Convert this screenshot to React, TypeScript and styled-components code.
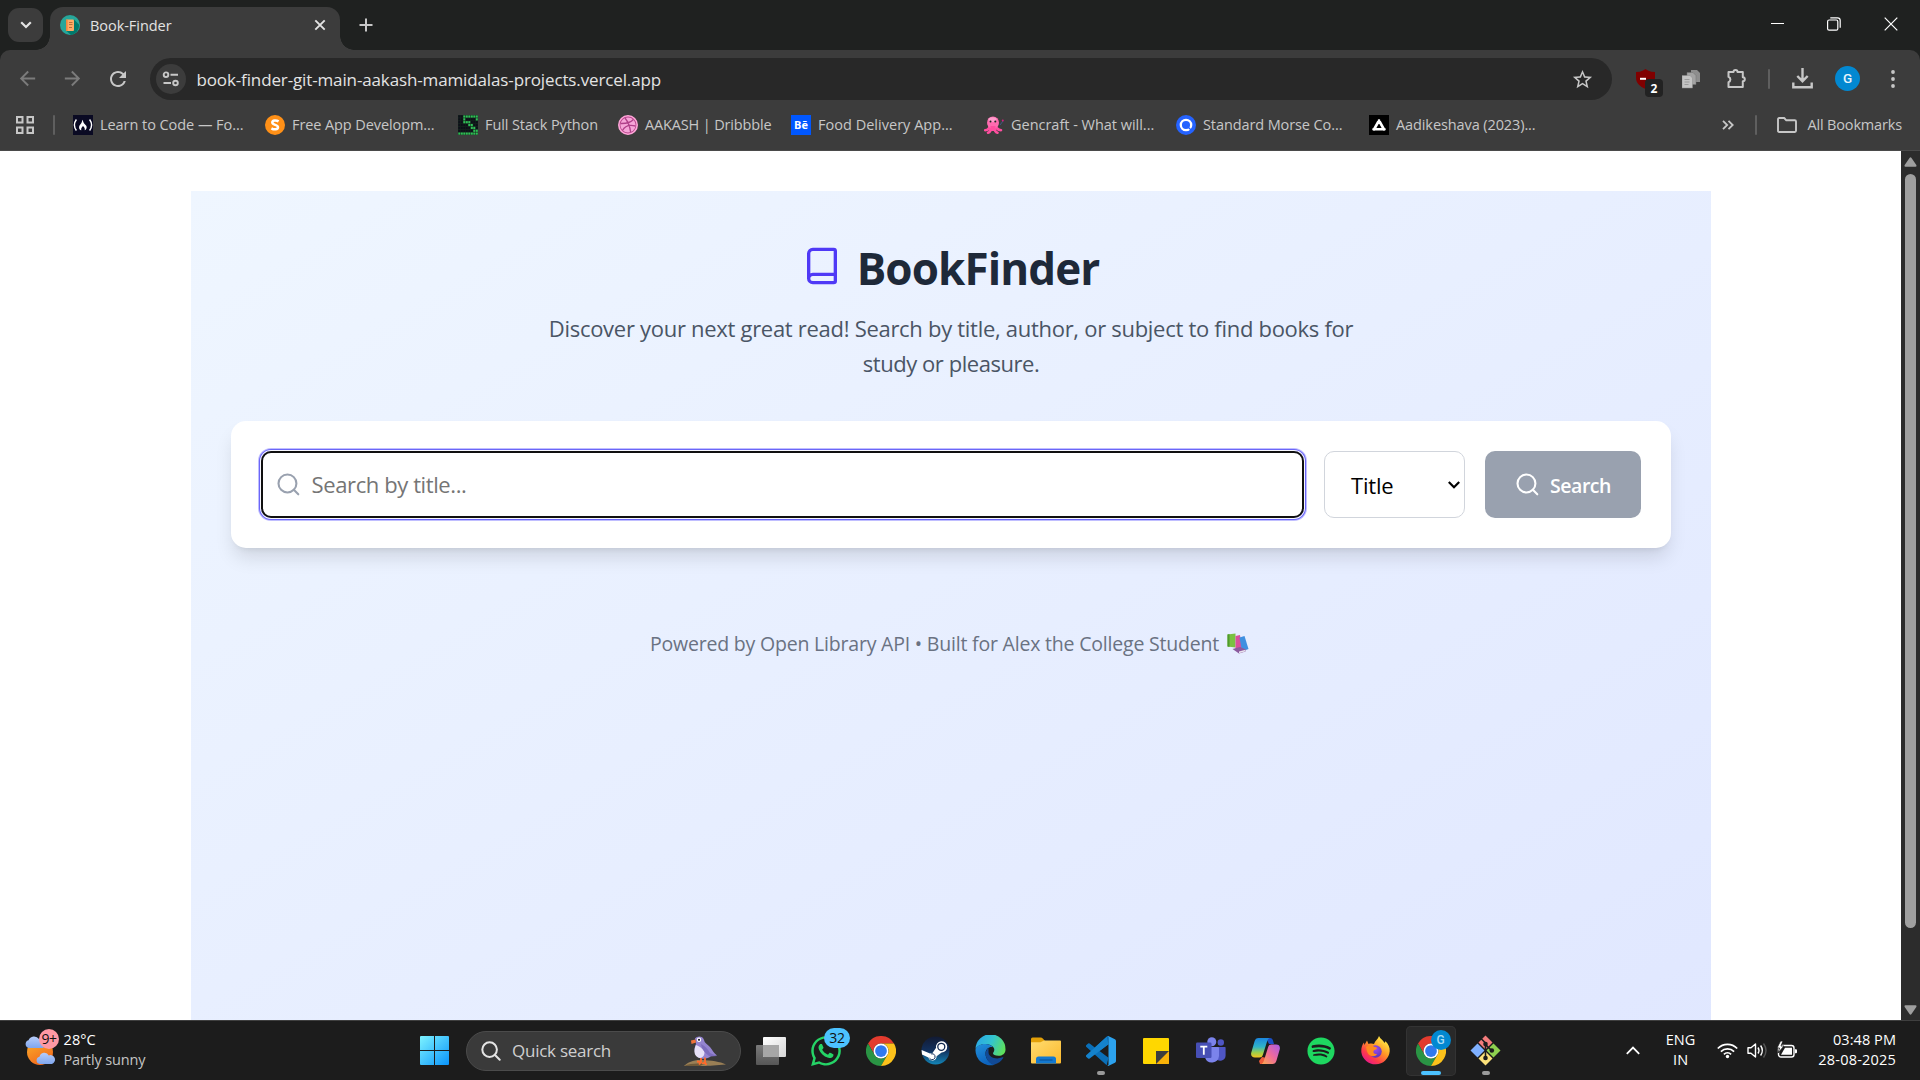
import React from "react";
import styled, { createGlobalStyle, css } from "styled-components";
import { Book } from "lucide-react";
import { FaWhatsapp, FaSpotify } from "react-icons/fa";
import { MdArrowBack, MdArrowForward, MdRefresh, MdStarBorder } from "react-icons/md";

const Global = createGlobalStyle`
  * { box-sizing: border-box; }
  body { margin: 0; overflow: hidden; font-family: "Open Sans", "Noto Sans", sans-serif; }
  svg { display: block; flex: none; }
`;

const Screen = styled.div`
  display: grid;
  grid-template-rows: 50px 101px 869px 60px;
  width: 1920px;
  height: 1080px;
  overflow: hidden;
`;

const Label = styled.span<{ $size?: number; $track?: number; $color?: string; $weight?: number }>`
  font-size: ${(p) => p.$size ?? 14.5}px;
  font-weight: ${(p) => p.$weight ?? 400};
  letter-spacing: ${(p) => p.$track ?? 0}px;
  color: ${(p) => p.$color ?? "#c7c7c7"};
  white-space: nowrap;
`;

/* ---------- tab strip ---------- */

const TabStrip = styled.header`
  display: flex;
  background: #1f2120;
`;

const TabSearch = styled.button`
  display: grid;
  place-items: center;
  width: 35px;
  height: 34px;
  margin: 8px 7px 0 8px;
  padding: 0;
  border: 0;
  border-radius: 11px;
  background: #3c3c3c;
`;

const Tab = styled.div`
  position: relative;
  display: flex;
  align-items: center;
  width: 290px;
  height: 43px;
  margin-top: 7px;
  padding: 0 12px 7px 10px;
  border-radius: 13px 13px 0 0;
  background: #3c3c3c;

  &::before,
  &::after {
    content: "";
    position: absolute;
    bottom: 0;
    width: 14px;
    height: 14px;
  }
  &::before {
    left: -14px;
    background: radial-gradient(circle at 0 0, transparent 13.5px, #3c3c3c 14px);
  }
  &::after {
    right: -14px;
    background: radial-gradient(circle at 100% 0, transparent 13.5px, #3c3c3c 14px);
  }
`;

const TabTitle = styled(Label)`
  flex: 1;
  margin-left: 10px;
  padding-top: 1px;
`;

const NewTab = styled.div`
  display: grid;
  place-items: center;
  width: 51px;
  height: 50px;
`;

const WindowButtons = styled.div`
  display: flex;
  align-items: center;
  gap: 43px;
  height: 48px;
  margin-left: auto;
  padding-right: 22px;
`;

/* ---------- toolbar ---------- */

const Chrome = styled.div`
  background: #1f2120;
`;

const ChromeBody = styled.div`
  display: grid;
  grid-template-rows: 57px 43px;
  height: 101px;
  border-radius: 10px 10px 0 0;
  border-bottom: 1px solid #4a4a4a;
  background: #3c3c3c;
`;

const Toolbar = styled.div`
  display: flex;
  align-items: center;
  padding-left: 5px;
`;

const Tool = styled.div<{ $w?: number; $dim?: boolean }>`
  display: grid;
  place-items: center;
  width: ${(p) => p.$w ?? 45}px;
  height: 42px;
  color: ${(p) => (p.$dim ? "#7b7b7b" : "#c7c7c7")};
`;

const AddressBar = styled.div`
  display: flex;
  align-items: center;
  width: 1462px;
  height: 42px;
  margin: 1px 11px 0 10px;
  padding: 0 18px 0 6px;
  border-radius: 21px;
  background: #282828;
  color: #c7c7c7;
`;

const SiteInfo = styled.div`
  display: grid;
  place-items: center;
  width: 30px;
  height: 30px;
  margin-right: 10.5px;
  border-radius: 50%;
  background: #3c3c3c;
`;

const Url = styled(Label)`
  flex: 1;
`;

const Divider = styled.div<{ $ml?: number; $mr?: number }>`
  width: 2px;
  height: 20px;
  margin-left: ${(p) => p.$ml ?? 0}px;
  margin-right: ${(p) => p.$mr ?? 0}px;
  border-radius: 1px;
  background: #5f5f5f;
`;

const ShieldTool = styled(Tool)`
  position: relative;
`;

const ShieldCount = styled.span`
  position: absolute;
  left: 22px;
  top: 21px;
  width: 18px;
  height: 18px;
  border-radius: 4px;
  background: #222;
  color: #fff;
  font-size: 12px;
  font-weight: 700;
  line-height: 19px;
  text-align: center;
`;

const Avatar = styled.div`
  width: 25px;
  height: 25px;
  border-radius: 50%;
  background: #0288d1;
  color: #e8f4fb;
  font: 500 13.5px/25px Roboto, sans-serif;
  text-align: center;
`;

/* ---------- bookmarks ---------- */

const Bookmarks = styled.nav`
  display: flex;
  align-items: center;
  padding: 0 18px 7px 15.5px;
`;

const BookmarkText = styled(Label)`
  padding-bottom: 2px;
`;

const Bookmark = styled.div<{ $w: number }>`
  display: flex;
  align-items: center;
  gap: 7px;
  width: ${(p) => p.$w}px;
`;

const AllBookmarks = styled.div`
  display: flex;
  align-items: center;
  gap: 10px;
`;

const Overflow = styled.div`
  margin-left: auto;
`;

/* ---------- page ---------- */

const Viewport = styled.main`
  display: flex;
  overflow: hidden;
  background: #fff;
`;

const Page = styled.div`
  flex: 1;
  padding: 40px 190px 0 191px;
`;

const Finder = styled.div`
  height: 875px;
  padding: 50px 40px 0;
  background: linear-gradient(to bottom right in oklab, #eff6ff, #e0e7ff);
`;

const Brand = styled.h1`
  display: flex;
  align-items: center;
  justify-content: center;
  gap: 15px;
  height: 54px;
  margin: 0;
  padding-right: 1px;

  svg {
    margin-bottom: 5px;
  }
`;

const Tagline = styled.p`
  display: grid;
  justify-items: center;
  margin: 16px 0 40px;
  line-height: 35px;
`;

const SearchCard = styled.form`
  display: flex;
  gap: 20px;
  height: 127px;
  padding: 30px;
  border-radius: 15px;
  background: #fff;
  box-shadow: 0 12.5px 18.75px -3.75px rgba(0, 0, 0, 0.12), 0 5px 7.5px -5px rgba(0, 0, 0, 0.1);
`;

const Field = styled.label`
  display: flex;
  align-items: center;
  gap: 11px;
  flex: 1;
  padding-left: 12.6px;
  border: 2px solid #101010;
  border-radius: 10px;
  box-shadow: 0 0 0 1px #f8f8ff, 0 0 0 2px #6b66f8, 0 0 0 3px #c0beff;
`;

const Query = styled.input`
  flex: 1;
  padding: 0 0 1px;
  border: 0;
  outline: 0;
  background: transparent;
  font: 400 22px "Open Sans", "Noto Sans", sans-serif;
  letter-spacing: -0.4px;

  &::placeholder {
    color: #757575;
    opacity: 1;
  }
`;

const Kind = styled.div`
  display: flex;
  align-items: center;
  justify-content: space-between;
  width: 141px;
  padding: 0 4px 0 26px;
  border: 1px solid #d1d5dc;
  border-radius: 10px;
`;

const Submit = styled.button`
  display: flex;
  align-items: center;
  gap: 10px;
  width: 156px;
  padding: 0 0 0 30px;
  border: 0;
  border-radius: 10px;
  background: #99a1af;
  font-family: inherit;
`;

const SubmitText = styled(Label)`
  padding-top: 2px;
`;

const Credits = styled.footer`
  display: flex;
  align-items: center;
  justify-content: center;
  gap: 8px;
  height: 30px;
  margin-top: 80px;
  padding-right: 3px;
`;

const Scrollbar = styled.div`
  display: flex;
  flex-direction: column;
  align-items: center;
  width: 19px;
  padding: 6px 0 5px;
  background: #2c2c2c;
`;

const Thumb = styled.div`
  width: 11px;
  height: 754px;
  margin: 7px 0 auto;
  border-radius: 6px;
  background: #9f9f9f;
`;

/* ---------- taskbar ---------- */

const Taskbar = styled.footer`
  display: flex;
  align-items: center;
  border-top: 1px solid #3f3f3f;
  background: #1c1c1c;
`;

const Weather = styled.div`
  display: flex;
  align-items: center;
  width: 407px;
  padding-left: 24px;
`;

const WeatherIcon = styled.div`
  position: relative;
  width: 39.5px;
`;

const badge = css`
  position: absolute;
  color: #111;
  text-align: center;
`;

const AlertBadge = styled.span`
  ${badge}
  left: 15px;
  top: -6px;
  width: 20px;
  height: 20px;
  border-radius: 50%;
  background: #ff99a4;
  font-size: 14px;
  letter-spacing: -0.4px;
  line-height: 20px;
`;

const CountBadge = styled.span`
  ${badge}
  left: 26px;
  top: 5px;
  width: 26px;
  height: 20px;
  border-radius: 10px;
  background: #4cc2ff;
  font-size: 14px;
  letter-spacing: -0.3px;
  line-height: 20px;
`;

const ProfileBadge = styled.span`
  ${badge}
  left: 25px;
  top: 4px;
  width: 20px;
  height: 20px;
  border-radius: 50%;
  background: #0288d1;
  color: #a9dcf5;
  font: 500 12px/20px Roboto, sans-serif;
`;

const Stack = styled.div<{ $align?: string }>`
  display: grid;
  justify-items: ${(p) => p.$align ?? "start"};
  padding-bottom: 2px;
  line-height: 20px;
`;

const TaskCell = styled.div<{ $active?: boolean }>`
  position: relative;
  display: grid;
  place-items: center;
  width: ${(p) => (p.$active ? 50 : 55)}px;
  height: ${(p) => (p.$active ? 50 : 55)}px;
  margin: 0 ${(p) => (p.$active ? 2.5 : 0)}px;
  border-radius: 5px;
  ${(p) => p.$active && "background: #292929; box-shadow: inset 0 0 0 1px #333;"}
`;

const Running = styled.i<{ $wide?: boolean }>`
  position: absolute;
  bottom: ${(p) => (p.$wide ? 1 : 3)}px;
  left: 50%;
  width: ${(p) => (p.$wide ? 20 : 8)}px;
  height: 4px;
  border-radius: 2px;
  background: ${(p) => (p.$wide ? "#4cc2ff" : "#9a9a9a")};
  transform: translateX(-50%);
`;

const QuickSearch = styled.div`
  display: flex;
  align-items: center;
  width: 275px;
  height: 40px;
  margin: 0 2px 0 4px;
  padding: 0 14px 0 13.5px;
  border: 1px solid #4b4b4b;
  border-radius: 20px;
  background: #3a3a3a;
`;

const QuickLabel = styled(Label)`
  flex: 1;
  margin-left: 11.5px;
`;

const Tray = styled.div`
  display: flex;
  align-items: center;
  margin-left: auto;
  padding-right: 24px;
`;

const TrayIcons = styled.div`
  display: flex;
  align-items: center;
  gap: 9px;
  margin: 0 20px 0 22px;
  padding-bottom: 1px;
`;

const LangStack = styled(Stack)`
  margin-left: 26px;
  padding: 0 0 1px;
`;

/* ---------- drawings ---------- */

const stroke = (w: number, c = "currentColor") => ({ fill: "none", stroke: c, strokeWidth: w });

const Magnifier = ({ color }: { color: string }) => (
  <svg width="25" height="25" viewBox="0 0 24 24" {...stroke(2, color)} strokeLinecap="round">
    <circle cx="11" cy="11" r="8.6" />
    <path d="m21.4 21.4-4.3-4.3" />
  </svg>
);

const BookFavicon = () => (
  <svg width="20" height="20" viewBox="0 0 20 20">
    <circle cx="10" cy="10" r="10" fill="#26a69a" />
    <path d="M14 4.5 19.2 9.7A10 10 0 0 1 11 20l-5-4.5z" fill="#00796b" />
    <rect x="6" y="4.5" width="8" height="11.5" rx="1" fill="#ffab66" />
    <path d="M6 4.5h1.6v11.5H6z" fill="#f0863c" />
    <path d="M9 7.5h3.5M9 9.5h3.5M9 12.5h3" stroke="#b8713a" strokeWidth="1" />
  </svg>
);

const FccIcon = () => (
  <svg width="20" height="20" viewBox="0 0 20 20">
    <path d="M0 0h20v20H0z" fill="#0a0a23" />
    <path d="M3.4 4.500Q-.6 10 3.4 15.500M16.600 4.500Q20.600 10 16.600 15.500" {...stroke(1.4, "#fff")} />
    <path d="M9 4.700c1.600 1.500 1.200 3 2.600 4.400 1.400 1.400 2.400 2.200 2 3.900-.3 1.200-1 1.900-1.900 2.300.4-1.700-.2-3-1.700-4.300-1.300 1.300-2.200 2.600-1.700 4.300-1.400-.4-2.500-1.600-2.200-3.400.4-2.300 3.400-3.700 2.900-7.200z" fill="#fff" />
  </svg>
);

const SIcon = () => (
  <svg width="20" height="20" viewBox="0 0 20 20">
    <circle cx="10" cy="10" r="10" fill="#ff9017" />
    <path d="M13.6 6.400C11.400 5 7.300 4.900 7.300 7.500c0 2.800 5.700 1.900 5.700 4.700 0 2.700-4.200 2.500-6.600 1.100" {...stroke(2.5, "#fff")} />
  </svg>
);

const PixelIcon = () => {
  const art = ["00111111", "00100001", "00111000", "00001100", "00000110", "00000011", "11111111"];
  return (
    <svg width="20" height="20" viewBox="0 0 20 20">
      <path d="M0 0h20v20H0z" fill="#16271f" />
      {art.map((row, y) =>
        row.split("").map((v, x) => (
          <rect key={`${x}-${y}`} x={x * 2.5 + 0.3} y={y * 2.85 + 0.4} width="2" height="2.2" fill={v === "1" ? "#2fbf55" : "#0d0f18"} />
        ))
      )}
    </svg>
  );
};

const Dribbble = () => (
  <svg width="20" height="20" viewBox="0 0 20 20">
    <circle cx="10" cy="10" r="9.2" fill="#b8468c" stroke="#ffa6d9" strokeWidth="1.6" />
    <circle cx="10" cy="10" r="7.6" fill="#f6a5d8" />
    <path d="M7 3c4 5 5 9 5.600 14M2.600 8.500c6 .2 10-.8 12.800-4M4.500 15.500c2.500-5 7.500-6 13-4.500" {...stroke(1.3, "#b0408a")} />
  </svg>
);

const BehanceTile = styled.div`
  width: 20px;
  height: 20px;
  background: #0057ff;
  color: #fff;
  font: 700 11px/20px "Open Sans", sans-serif;
  text-align: center;
`;

const Octopus = () => (
  <svg width="20" height="20" viewBox="0 0 20 20">
    <path d="M5.500 11q0 4-4.300 4.200M7 12q.2 5-3 5.800M10.500 12q-.2 5 3 5.800M12 11q.5 3.700 5 4.200" {...stroke(2.600, "#ff4fa0")} strokeLinecap="round" />
    <ellipse cx="9" cy="7.700" rx="6" ry="6.200" fill="#ff6bb0" />
    <path d="M6.500 11h5v5h-5z" fill="#ff4fa0" />
    <ellipse cx="8.500" cy="4.600" rx="4" ry="2.400" fill="#ff9ccc" />
    <circle cx="6.500" cy="6.500" r="1" fill="#222" />
    <circle cx="11.300" cy="6.500" r="1" fill="#222" />
    <path d="m16 10 3-4" stroke="#3c5a8a" />
    <circle cx="18.800" cy="5.500" r="1" fill="#d81b7a" />
  </svg>
);

const MorseIcon = () => (
  <svg width="20" height="20" viewBox="0 0 20 20">
    <circle cx="10" cy="10" r="10" fill="#2563ff" />
    <circle cx="10" cy="10" r="5.2" {...stroke(2.3, "#fff")} />
    <path d="m11.800 11.800 3.500 3.500" stroke="#2563ff" strokeWidth="1.3" />
  </svg>
);

const TriangleIcon = () => (
  <svg width="20" height="20" viewBox="0 0 20 20">
    <path d="M0 0h20v20H0z" fill="#000" />
    <path d="M10 5.500 5 14.500M10 5.500l5 9M4.500 14.300h11" {...stroke(2.6, "#fff")} strokeLinecap="round" />
  </svg>
);

const ChromeLogo = () => (
  <svg width="30" height="30" viewBox="0 0 48 48">
    <path d="M44.800 12A24 24 0 0 0 3.200 12L13.600 30A12 12 0 0 1 24 12z" fill="#e33b2e" />
    <path d="M3.200 12A24 24 0 0 0 24 48L34.400 30A12 12 0 0 1 13.600 30z" fill="#2a9444" />
    <path d="M24 48A24 24 0 0 0 44.800 12H24A12 12 0 0 1 34.400 30z" fill="#fcc21b" />
    <circle cx="24" cy="24" r="12" fill="#fff" />
    <circle cx="24" cy="24" r="9.4" fill="#3079ee" />
  </svg>
);

const SteamLogo = () => (
  <svg width="29" height="29" viewBox="0 0 29 29">
    <defs>
      <linearGradient id="steam" x1="0" y1="0" x2="0" y2="1">
        <stop offset="0" stopColor="#121a33" />
        <stop offset=".5" stopColor="#12305c" />
        <stop offset="1" stopColor="#1386b8" />
      </linearGradient>
    </defs>
    <circle cx="14.5" cy="14.5" r="14" fill="url(#steam)" />
    <path d="M.6 14 9 17.500l2.500-.4 3.600-5.300a5.600 5.600 0 1 1 5.500 4.600l-5 3.900a4.200 4.200 0 0 1-8.200 1.300L1 18.600z" fill="#fff" />
    <circle cx="20.3" cy="10.8" r="3.5" fill="#fff" stroke="#12284f" strokeWidth="1.3" />
    <path d="M8.500 22.200a3 3 0 1 0 1.600-4.300" {...stroke(1, "#12305c")} />
  </svg>
);

const EdgeLogo = () => (
  <svg width="31" height="31" viewBox="0 0 31 31">
    <defs>
      <linearGradient id="edgeTop" x1="0" y1=".3" x2="1" y2=".6">
        <stop offset="0" stopColor="#2aa7e6" />
        <stop offset=".5" stopColor="#33c4cf" />
        <stop offset="1" stopColor="#5fe05a" />
      </linearGradient>
      <linearGradient id="edgeLeft" x1="0" y1="0" x2=".4" y2="1">
        <stop offset="0" stopColor="#2291dc" />
        <stop offset="1" stopColor="#0d63bd" />
      </linearGradient>
    </defs>
    <path d="M.5 14A15 15 0 0 1 30.500 14.500c0 4-3 6.300-7 6.300-3.500 0-5.500-1.300-5.500-2.500 0-1 1.300-1.500 1.300-3.600C19.300 11.500 15 9 10.500 9 5 9 1.500 12 .5 14z" fill="url(#edgeTop)" />
    <path d="M.5 14.500C1.500 11 5.500 8.700 10.500 8.900c3.500.2 6 1.600 7.500 3.300-4-.8-7.500 2-7.500 6.300 0 6 4.500 9.700 9 11.200A15 15 0 0 1 .5 14.500z" fill="url(#edgeLeft)" />
    <path d="M13.500 13C9 16 9.500 24.500 17 29.500c.6.400 1.800.3 2.500.1 3.500-1 6.800-3.300 8.700-6.600.4-.7-.2-1-.8-.7-6 2.700-13.900.2-13.900-5.300z" fill="#114a96" />
  </svg>
);

const FolderLogo = () => (
  <svg width="30" height="27" viewBox="0 0 30 27">
    <defs>
      <linearGradient id="folder" x1="0" y1="0" x2="1" y2="1">
        <stop offset="0" stopColor="#ffdc70" />
        <stop offset="1" stopColor="#fcb92d" />
      </linearGradient>
    </defs>
    <path d="M0 2Q0 .5 1.500.5h8Q11 .5 12 1.700L14 4v5H0z" fill="#e3a008" />
    <path d="M0 5.200h9.500L13 3.500h16q1 0 1 1v21q0 1-1 1H1q-1 0-1-1z" fill="url(#folder)" />
    <path d="M5 26.500V22q0-2.500 2.500-2.500h15Q25 19.500 25 22v4.500z" fill="#1379d0" />
    <path d="M8.500 23h13" stroke="#0b4e92" strokeWidth="1" />
  </svg>
);

const CodeLogo = () => (
  <svg width="30" height="30" viewBox="0 0 100 100">
    <path d="M75.900.9a6.200 6.200 0 0 0-7.100 1.200L29.400 38 12.200 25a4.200 4.200 0 0 0-5.300.2L1.400 30.200a4.200 4.200 0 0 0 0 6.200L68.800 97.900 75 72.700 45.100 50 75 27.300z" fill="#0a6fb8" />
    <path d="M68.800 2.100 29.400 38 1.400 63.600a4.200 4.200 0 0 0 0 6.200l5.500 5a4.200 4.200 0 0 0 5.300.2L75 27.300z" fill="#1482cc" />
    <path d="M70.900 99.300a6.200 6.200 0 0 0 5-.2l20.600-9.900A6.250 6.250 0 0 0 100 83.600V16.400a6.250 6.250 0 0 0-3.500-5.600L75.900.9a6.200 6.200 0 0 0-7.100 1.200C71 0 75 1.500 75 5v90c0 3-3.500 5-6.200 2.900z" fill="#2ca2ee" />
  </svg>
);

const StickyLogo = () => (
  <svg width="26" height="26" viewBox="0 0 26 26">
    <rect width="26" height="26" rx="1" fill="#ffd700" />
    <path d="M13 26V13h13v12q0 1-1 1z" fill="#f9b208" />
    <path d="M13 13h13L13 26z" fill="#3d3d3d" />
  </svg>
);

const TeamsLogo = () => (
  <svg width="30" height="27" viewBox="0 0 30 27">
    <circle cx="24.8" cy="5.5" r="3.2" fill="#4f56c4" />
    <path d="M20 10h9q.6 0 .6.700v8a5.400 5.400 0 0 1-9.600 3z" fill="#4f56c4" />
    <circle cx="15.8" cy="4.8" r="4.5" fill="#7b83eb" />
    <path d="M9 10h13q1 0 1 1v8a7.200 7.200 0 0 1-14 1.500z" fill="#7b83eb" />
    <rect y="5.5" width="15.5" height="15.5" rx="1.2" fill="#474fb5" />
    <path d="M4.300 9.700h7M7.800 9.700v8" {...stroke(1.8, "#fff")} />
  </svg>
);

const CopilotLogo = () => (
  <svg width="29" height="26" viewBox="0 0 29 26">
    <defs>
      <linearGradient id="cpA" x1="0" y1="0" x2="0" y2="1">
        <stop offset="0" stopColor="#1b86dd" />
        <stop offset=".45" stopColor="#2fb3c9" />
        <stop offset=".75" stopColor="#9ccf4b" />
        <stop offset="1" stopColor="#f3c41f" />
      </linearGradient>
      <linearGradient id="cpB" x1="1" y1="0" x2="0" y2="1">
        <stop offset="0" stopColor="#a95be8" />
        <stop offset=".5" stopColor="#ee6a9c" />
        <stop offset="1" stopColor="#fbab4c" />
      </linearGradient>
    </defs>
    <path d="M15 0h4q2.200 0 2.800 2l1.200 4h-5z" fill="#1a4fc4" />
    <path d="M9 26h5l2-6-5-1-3 4z" fill="#ef5a3a" />
    <path d="M7.500 0h11c-1.500.7-2 2-2.600 4L12 16.500c-.8 2.400-1.700 3-3.500 3H4c-3 0-4.500-1.700-3.700-5L3.500 3.500C4.200 1 5.500 0 7.500 0z" fill="url(#cpA)" />
    <path d="M21.500 26h-11c1.500-.7 2-2 2.600-4L17 9.500c.8-2.400 1.700-3 3.500-3H25c3 0 4.500 1.700 3.700 5l-3.200 11c-.7 2.500-2 3.500-4 3.500z" fill="url(#cpB)" />
  </svg>
);

const FirefoxLogo = () => (
  <svg width="29" height="29" viewBox="0 0 29 29">
    <defs>
      <linearGradient id="fx" x1=".85" y1=".1" x2=".2" y2=".95">
        <stop offset="0" stopColor="#fff04a" />
        <stop offset=".4" stopColor="#ff9a25" />
        <stop offset=".75" stopColor="#ff3b4a" />
        <stop offset="1" stopColor="#e8178a" />
      </linearGradient>
      <radialGradient id="fxc" cx=".5" cy=".3" r=".7">
        <stop offset="0" stopColor="#a04bf0" />
        <stop offset="1" stopColor="#5b36b8" />
      </radialGradient>
    </defs>
    <path d="M18 0c1 3 4.500 4.200 5.500 7l1-1.700c3 3 4.500 6 4.200 10A14.300 14.300 0 0 1 .3 16C0 11.500 1.500 8 3 6.500L3.400 9 6 4.500 7.500 8c2-.7 4-.6 5.500 0C14 4.500 17 3.500 18 0z" fill="url(#fx)" />
    <circle cx="14.5" cy="15.5" r="6.2" fill="url(#fxc)" />
    <path d="M5 11c3-2.500 6-2 8.500 0 1.500 0 2.500.5 2.500 1.500-1 1.500-3 1-3.500 2.500-.5 2 1 3.500 3.500 3-1.500 3-7 3-9-.5-1.500-2.500-1.500-5-2-6.500z" fill="#ff8a1f" />
  </svg>
);

const GitLogo = () => (
  <svg width="31" height="31" viewBox="0 0 31 31">
    <path d="m15.500.5 7 7-7 7-7-7z" fill="#f47c7c" />
    <path d="m23.500 8.500 7 7-7 7-7-7z" fill="#8fd14f" />
    <path d="m15.500 16.500 7 7-7 7-7-7z" fill="#fce27a" />
    <path d="m7.500 8.500 7 7-7 7-7-7z" fill="#7fb0ff" />
    <path d="M11 3.500 15.500 8v15M15.500 9.500l6 6" {...stroke(1.6, "#1c1c1c")} />
    <circle cx="15.5" cy="9" r="2.3" fill="#1c1c1c" />
    <circle cx="15.5" cy="23" r="2.3" fill="#1c1c1c" />
    <circle cx="21.8" cy="15.5" r="2.3" fill="#1c1c1c" />
  </svg>
);

const Bird = () => (
  <svg width="42" height="32" viewBox="0 0 42 32">
    <path d="M0 31c4-4 10-6.500 18-6 9 .5 18 1.500 24 4.500-10 .5-16 1.500-24 1.500z" fill="#9a7f55" />
    <path d="M0 31c6-2.500 14-3 20-2l-4 2z" fill="#6e5a3a" />
    <path d="M11 3.500C13 .5 19 .5 20 5c.5 3 3 4 6 7 2.500 3 3.500 6 7 8.500l-6 .5c-3 3-9 4-13 1-4-3.500-4-9-2-13z" fill="#9484d0" />
    <path d="M12 10c3 1 6 3 8 6 1.500 3-1 7-4 7-4-.5-6-4-5.500-8 .2-2 .7-3.500 1.500-5z" fill="#e6e0f7" />
    <path d="M17 9c4 2 7 5 9 9l7 3-7 .5C22 19 18 15 17 9z" fill="#7d6dbd" />
    <path d="M11.500 4.500 7 5.500 7.500 9 12 7.500z" fill="#f0733a" />
    <circle cx="15" cy="4.8" r="2.2" fill="#fff" />
    <circle cx="15" cy="4.8" r="1.1" fill="#221a33" />
    <path d="M17 23v4l-4-.5M17 27l-2 2.500M21 22.500v5l-3 1M21 27.500l1.500 2.500" {...stroke(1.8, "#ff6a2b")} />
  </svg>
);

const WeatherArt = () => (
  <svg width="32" height="31" viewBox="0 0 32 31">
    <defs>
      <linearGradient id="sun" x1="0" y1="0" x2=".5" y2="1">
        <stop offset="0" stopColor="#fbb32a" />
        <stop offset="1" stopColor="#f26b1d" />
      </linearGradient>
      <linearGradient id="cloud" x1="0" y1="0" x2="0" y2="1">
        <stop offset="0" stopColor="#b7cdfa" />
        <stop offset="1" stopColor="#7fa6ee" />
      </linearGradient>
    </defs>
    <circle cx="16" cy="17" r="13" fill="url(#sun)" />
    <path d="M5 13a4 4 0 0 1-.5-7.800A6 6 0 0 1 15 4a5 5 0 0 1 4 9z" fill="url(#cloud)" />
    <path d="M16 29a3.700 3.700 0 0 1-.5-7.300 5 5 0 0 1 9.300-1.300A4.400 4.400 0 0 1 28 29z" fill="url(#cloud)" />
  </svg>
);

const BooksEmoji = () => (
  <svg width="22" height="21" viewBox="0 0 22 21">
    <path d="M.5 1.500 8.500.500v14l-8-1z" fill="#7ac142" />
    <path d="M.5 1.500 2.500 1v13l-2-.5z" fill="#4f9a2d" />
    <path d="M8.500 3 13 2l2 13-6.500 1z" fill="#d94f9b" />
    <path d="m12.500 4.500 5-1.500L21.500 16l-6.500 2.500z" fill="#3f8fe0" />
    <path d="M5.500 16 13 14l6 2.500-.5 2L12 20.500z" fill="#8b5a9e" />
    <path d="m12 18.500 6.500-1.800v1.600L12 20.300z" fill="#e9e4ee" />
  </svg>
);

const marks: [React.ReactNode, string, number, number][] = [
  [<FccIcon />, "Learn to Code — Fo...", -0.055, 192],
  [<SIcon />, "Free App Developm...", -0.09, 193],
  [<PixelIcon />, "Full Stack Python", -0.096, 160],
  [<Dribbble />, "AAKASH | Dribbble", -0.15, 173],
  [<BehanceTile>Bē</BehanceTile>, "Food Delivery App...", 0.02, 193],
  [<Octopus />, "Gencraft - What will...", -0.02, 192],
  [<MorseIcon />, "Standard Morse Co...", -0.1, 193],
  [<TriangleIcon />, "Aadikeshava (2023)...", -0.099, 190],
];

const BrowserTabs = () => (
  <TabStrip>
    <TabSearch>
      <svg width="12" height="8" viewBox="0 0 12 8" {...stroke(2.2, "#e3e3e3")}><path d="m1.200 1.200 4.800 4.800 4.800-4.800" /></svg>
    </TabSearch>
    <Tab>
      <BookFavicon />
      <TabTitle $track={-0.052} $color="#e3e3e3">Book-Finder</TabTitle>
      <svg width="16" height="12" viewBox="0 0 16 12" {...stroke(1.9, "#e3e3e3")}><path d="m3.300 1.300 9.400 9.400M12.700 1.300l-9.400 9.400" /></svg>
    </Tab>
    <NewTab>
      <svg width="14" height="14" viewBox="0 0 14 14" {...stroke(2, "#c7c7c7")}><path d="M7 .5v13M.5 7h13" /></svg>
    </NewTab>
    <WindowButtons>
      <svg width="13" height="13" viewBox="0 0 13 13" {...stroke(1, "#fff")}><path d="M0 5.500h13" /></svg>
      <svg width="14" height="14" viewBox="0 0 14 14" {...stroke(1.2, "#fff")}>
        <rect x=".6" y="3" width="10.2" height="10.2" rx="1.5" />
        <path d="M3.300.8h7.200a2.700 2.700 0 0 1 2.700 2.700v7.200" />
      </svg>
      <svg width="14" height="14" viewBox="0 0 14 14" {...stroke(1.2, "#fff")}><path d="m.7.7 12.600 12.600M13.300.7.7 13.300" /></svg>
    </WindowButtons>
  </TabStrip>
);

const BrowserToolbar = () => (
  <Toolbar>
    <Tool $dim><MdArrowBack size={23} /></Tool>
    <Tool $dim><MdArrowForward size={23} /></Tool>
    <Tool><MdRefresh size={24} /></Tool>
    <AddressBar>
      <SiteInfo>
        <svg width="18" height="16" viewBox="0 0 18 16" {...stroke(1.9)}>
          <circle cx="4" cy="3.7" r="2.3" /><path d="M8.500 3.700H16M1.500 12H9" /><circle cx="13.5" cy="12" r="2.3" />
        </svg>
      </SiteInfo>
      <Url $size={17} $track={-0.131} $color="#e3e3e3">book-finder-git-main-aakash-mamidalas-projects.vercel.app</Url>
      <MdStarBorder size={23} />
    </AddressBar>
    <ShieldTool>
      <svg width="19" height="20" viewBox="0 0 19 20"><path d="M9.500 0 12 1.500q3 1.500 7 1.500v6c0 5-4 8.500-9.500 11C4 17.500 0 14 0 9V3q4 0 7-1.500z" fill="#800000" /><path d="M4 9.800h6" stroke="#fff" strokeWidth="2" /></svg>
      <ShieldCount>2</ShieldCount>
    </ShieldTool>
    <Tool>
      <svg width="18" height="20" viewBox="0 0 18 20">
        <path d="M9 1h6l3 3v9H9z" fill="#8e8e8e" /><path d="M5 3.500h6l3 3v9H5z" fill="#a3a3a3" stroke="#707070" strokeWidth=".5" />
        <path d="M0 6.500h8l2.500 2.500v10H0z" fill="#c4c4c4" stroke="#8a8a8a" strokeWidth=".5" /><path d="M2.500 10.500h5M2.500 13h5M2.500 15.500h4" stroke="#9a9a9a" />
      </svg>
    </Tool>
    <Tool $w={47}>
      <svg width="21" height="21" viewBox="0 0 21 21" {...stroke(2)} strokeLinejoin="round">
        <path d="M2.500 4h5a2 2 0 0 1 4 0h5.300v5.300a2 2 0 0 1 0 4v5.800H2.500v-4.900a2.800 2.800 0 0 0 0-5.300z" />
      </svg>
    </Tool>
    <Divider $ml={8} $mr={9} />
    <Tool $w={47}>
      <svg width="21" height="21" viewBox="0 0 21 21" {...stroke(2.4)}><path d="M10.500 0v12.500M5.300 8l5.200 5.200L15.700 8M1.300 14.500v4.700h18.400v-4.700" /></svg>
    </Tool>
    <Tool $w={43}><Avatar>G</Avatar></Tool>
    <Tool $w={47}>
      <svg width="4" height="18" viewBox="0 0 4 18" fill="#c7c7c7"><circle cx="2" cy="2" r="1.9" /><circle cx="2" cy="9" r="1.9" /><circle cx="2" cy="16" r="1.9" /></svg>
    </Tool>
  </Toolbar>
);

const BookmarkBar = () => (
  <Bookmarks>
    <svg width="18" height="18" viewBox="0 0 18 18" {...stroke(2, "#c7c7c7")}>
      <path d="M1 1h5.500v5.500H1zM11.500 1H17v5.500h-5.500zM1 11.500h5.500V17H1zM11.500 11.500H17V17h-5.500z" />
    </svg>
    <Divider $ml={19} $mr={18.5} />
    {marks.map(([icon, text, track, w]) => (
      <Bookmark key={text} $w={w}>{icon}<BookmarkText $track={track}>{text}</BookmarkText></Bookmark>
    ))}
    <Overflow>
      <svg width="12" height="10" viewBox="0 0 12 10" {...stroke(1.8, "#c7c7c7")}><path d="m1 .8 4.200 4.200L1 9.200M6.500.8 10.700 5 6.500 9.200" /></svg>
    </Overflow>
    <Divider $ml={21} $mr={20} />
    <AllBookmarks>
      <svg width="20" height="16" viewBox="0 0 20 16" {...stroke(1.9, "#c7c7c7")} strokeLinejoin="round"><path d="M1 2.200Q1 1 2.200 1h5L9.300 3.300h8.500q1.200 0 1.200 1.200v9.300q0 1.200-1.200 1.200H2.200Q1 15 1 13.800z" /></svg>
      <BookmarkText $track={-0.16}>All Bookmarks</BookmarkText>
    </AllBookmarks>
  </Bookmarks>
);

const BookFinder = () => (
  <Finder>
    <Brand>
      <Book size={40} color="#4f39f6" strokeWidth={2} />
      <Label $size={44} $weight={700} $track={-0.9} $color="#1e2939">BookFinder</Label>
    </Brand>
    <Tagline>
      <Label $size={22} $track={-0.29} $color="#4a5565">Discover your next great read! Search by title, author, or subject to find books for</Label>
      <Label $size={22} $track={-0.453} $color="#4a5565">study or pleasure.</Label>
    </Tagline>
    <SearchCard>
      <Field><Magnifier color="#99a1af" /><Query placeholder="Search by title..." /></Field>
      <Kind>
        <Label $size={22} $track={-0.184} $color="#000">Title</Label>
        <svg width="12" height="8" viewBox="0 0 12 8" {...stroke(2.2, "#000")}><path d="m.8 1 5.200 5.200L11.200 1" /></svg>
      </Kind>
      <Submit type="button"><Magnifier color="#fff" /><SubmitText $size={19.5} $weight={600} $track={-0.459} $color="#fff">Search</SubmitText></Submit>
    </SearchCard>
    <Credits>
      <Label $size={19.5} $track={-0.2} $color="#6a7282">Powered by Open Library API • Built for Alex the College Student</Label>
      <BooksEmoji />
    </Credits>
  </Finder>
);

const SystemTaskbar = () => (
  <Taskbar>
    <Weather>
      <WeatherIcon><WeatherArt /><AlertBadge>9+</AlertBadge></WeatherIcon>
      <Stack>
        <Label $color="#fff" $track={0.1}>28°C</Label>
        <Label $color="#c4c4c4" $track={-0.118}>Partly sunny</Label>
      </Stack>
    </Weather>
    <TaskCell>
      <svg width="29" height="29" viewBox="0 0 29 29">
        <defs><linearGradient id="win" x1="0" y1="0" x2="1" y2="1"><stop offset="0" stopColor="#7df3ff" /><stop offset="1" stopColor="#0a94fb" /></linearGradient></defs>
        <path d="M1 0h13v14H0V1q0-1 1-1zM15 0h13q1 0 1 1v13H15zM0 15h14v14H1q-1 0-1-1zM15 15h14v13q0 1-1 1H15z" fill="url(#win)" />
      </svg>
    </TaskCell>
    <QuickSearch>
      <svg width="20" height="20" viewBox="0 0 20 20" {...stroke(2, "#e4e4e4")} strokeLinecap="round"><circle cx="8.6" cy="8.6" r="7.3" /><path d="m14 14 4.700 4.700" /></svg>
      <QuickLabel $size={17} $track={-0.253} $color="#cfcfcf">Quick search</QuickLabel>
      <Bird />
    </QuickSearch>
    <TaskCell>
      <svg width="30" height="28" viewBox="0 0 30 28">
        <defs>
          <linearGradient id="tvA" x1="0" y1="0" x2="1" y2="1"><stop offset="0" stopColor="#fff" /><stop offset="1" stopColor="#d6d6d6" /></linearGradient>
          <linearGradient id="tvB" x1="0" y1="0" x2="0" y2="1"><stop offset="0" stopColor="#7a7a7a" /><stop offset="1" stopColor="#565656" /></linearGradient>
        </defs>
        <rect y="8" width="23" height="20" rx="1" fill="url(#tvB)" />
        <rect x="7" width="23" height="20" rx="1" fill="url(#tvA)" />
        <path d="M7 8h16v12H8q-1 0-1-1z" fill="#a6a6a6" />
      </svg>
    </TaskCell>
    <TaskCell><FaWhatsapp size={34} color="#25d366" /><CountBadge>32</CountBadge></TaskCell>
    <TaskCell><ChromeLogo /></TaskCell>
    <TaskCell><SteamLogo /></TaskCell>
    <TaskCell><EdgeLogo /></TaskCell>
    <TaskCell><FolderLogo /></TaskCell>
    <TaskCell><CodeLogo /><Running /></TaskCell>
    <TaskCell><StickyLogo /></TaskCell>
    <TaskCell><TeamsLogo /></TaskCell>
    <TaskCell><CopilotLogo /></TaskCell>
    <TaskCell><FaSpotify size={28} color="#1ed760" /></TaskCell>
    <TaskCell><FirefoxLogo /></TaskCell>
    <TaskCell $active><ChromeLogo /><ProfileBadge>G</ProfileBadge><Running $wide /></TaskCell>
    <TaskCell><GitLogo /><Running /></TaskCell>
    <Tray>
      <svg width="14" height="9" viewBox="0 0 14 9" {...stroke(1.8, "#fff")}><path d="m.8 7.800 6.200-6.200 6.200 6.200" /></svg>
      <LangStack $align="center"><Label $color="#fff">ENG</Label><Label $color="#fff">IN</Label></LangStack>
      <TrayIcons>
        <svg width="21" height="17" viewBox="0 0 21 17" {...stroke(1.7, "#fff")}>
          <path d="M.8 6.500a13.500 13.500 0 0 1 19.400 0M3.900 9.600a9.300 9.300 0 0 1 13.200 0M6.900 12.400a5.200 5.200 0 0 1 7.200 0" /><circle cx="10.5" cy="14.5" r="1.7" fill="#fff" stroke="none" />
        </svg>
        <svg width="21" height="17" viewBox="0 0 21 17" {...stroke(1.4, "#fff")} strokeLinejoin="round">
          <path d="M1 5.800h3L8.500 2v13L4 11.200H1zM11 5.500q2 3 0 6M13.600 3.500q3.500 5 0 10" /><path d="M16.500 1.500q5 7 0 14" stroke="#555" />
        </svg>
        <svg width="21" height="18" viewBox="0 0 21 18">
          <rect x="1.5" y="4.5" width="15.5" height="11.5" rx="2.5" {...stroke(1.4, "#fff")} /><path d="M18 8.200h1q1 0 1 1v2q0 1-1 1h-1z" fill="#fff" />
          <path d="M8 6.700h7v7.100H4z" fill="#fff" /><path d="M3.500 0 0 7h2.500L1 12l6-7H4L6 0z" fill="#fff" stroke="#1c1c1c" strokeWidth=".8" />
        </svg>
      </TrayIcons>
      <Stack $align="end"><Label $color="#fff" $track={0.062}>03:48 PM</Label><Label $color="#fff" $track={0.2}>28-08-2025</Label></Stack>
    </Tray>
  </Taskbar>
);

export default function App() {
  return (
    <Screen>
      <Global />
      <BrowserTabs />
      <Chrome>
        <ChromeBody>
          <BrowserToolbar />
          <BookmarkBar />
        </ChromeBody>
      </Chrome>
      <Viewport>
        <Page><BookFinder /></Page>
        <Scrollbar>
          <svg width="13" height="10" viewBox="0 0 13 10" fill="#9f9f9f"><path d="M5.500 1q1-1.400 2 0L12.300 8q.7 1.700-.8 1.700h-10Q0 9.700.7 8z" /></svg>
          <Thumb />
          <svg width="13" height="10" viewBox="0 0 13 10" fill="#9f9f9f"><path d="M5.500 9q1 1.400 2 0L12.300 2q.7-1.700-.8-1.700h-10Q0 .3.700 2z" /></svg>
        </Scrollbar>
      </Viewport>
      <SystemTaskbar />
    </Screen>
  );
}
